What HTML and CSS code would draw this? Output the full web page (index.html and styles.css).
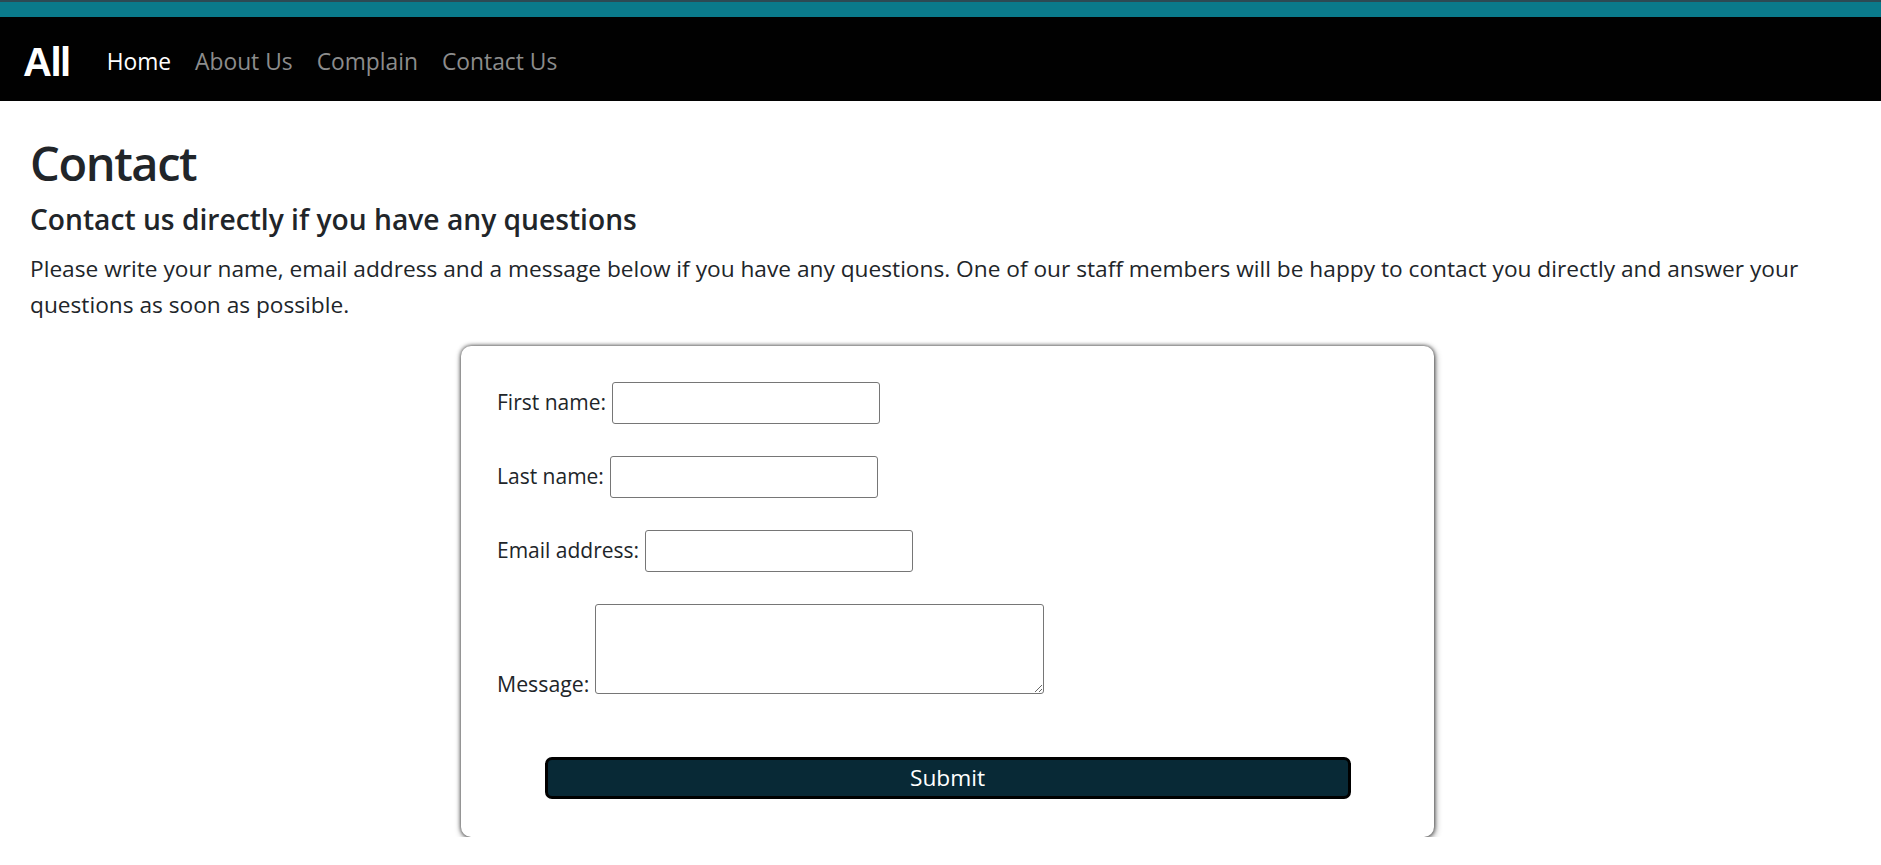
FILE: index.html
```html
<!DOCTYPE html>
<html lang="en">
<head>
<meta charset="utf-8">
<title>Contact</title>
<link rel="stylesheet" href="styles.css">
</head>
<body>
<div class="topbar"></div>
<nav class="navbar">
  <a class="brand" href="#">All</a>
  <ul class="nav-links">
    <li><a class="nav-link active" href="#">Home</a></li>
    <li><a class="nav-link" href="#">About Us</a></li>
    <li><a class="nav-link" href="#">Complain</a></li>
    <li><a class="nav-link" href="#">Contact Us</a></li>
  </ul>
</nav>
<main class="main">
  <h1 class="title">Contact</h1>
  <h5 class="subtitle">Contact us directly if you have any questions</h5>
  <p class="intro">Please write your name, email address and a message below if you have any questions. One of our staff members will be happy to contact you directly and answer your questions as soon as possible.</p>
  <form class="card">
    <div class="row">
      <label class="label" for="fname">First name:</label>
      <input class="field" type="text" id="fname">
    </div>
    <div class="row">
      <label class="label" for="lname">Last name:</label>
      <input class="field" type="text" id="lname">
    </div>
    <div class="row">
      <label class="label" for="email">Email address:</label>
      <input class="field" type="email" id="email">
    </div>
    <div class="row row-message">
      <label class="label label-message" for="msg">Message:</label>
      <textarea class="message" id="msg"></textarea>
    </div>
    <button class="submit" type="button">Submit</button>
  </form>
</main>
</body>
</html>
```
FILE: styles.css
```css
* { box-sizing: border-box; }

body {
  margin: 0;
  font-family: "Open Sans", "Noto Sans", sans-serif;
  font-size: 22.7px;
  line-height: 36px;
  color: #212529;
  background: #fff;
}

.topbar {
  height: 17px;
  background: #0a7a8b;
  border-top: 2px solid #2c4a54;
}

.navbar {
  height: 84px;
  background: #010101;
  display: flex;
  align-items: center;
  padding-left: 23px;
  padding-top: 5px;
}

.brand {
  font-family: "Liberation Sans", Arial, sans-serif;
  font-weight: 700;
  font-size: 40px;
  letter-spacing: -1.5px;
  color: #fff;
  text-decoration: none;
  margin-right: 25px;
  line-height: 1;
}

.nav-links {
  display: flex;
  list-style: none;
  margin: 0;
  padding: 0;
}

.nav-link {
  display: block;
  padding: 0 12px;
  font-size: 22.8px;
  color: #8c8c8c;
  text-decoration: none;
}

.nav-link.active { color: #fff; }

.main {
  padding: 32px 30px 0;
}

.title {
  margin: 0 0 10px;
  font-size: 47px;
  font-weight: 600;
  letter-spacing: -1.4px;
  line-height: 60px;
}

.subtitle {
  margin: 0 0 14px;
  font-size: 28.2px;
  font-weight: 600;
  line-height: 1.2;
}

.intro {
  margin: 0 0 23px;
}

.card {
  width: 973px;
  margin-left: 431px;
  padding: 36px 36px 38px;
  border-radius: 10px;
  background: #fff;
  box-shadow: 0 0 4px rgba(0, 0, 0, 0.75), 1px 2px 7px rgba(0, 0, 0, 0.45);
}

.row {
  display: flex;
  align-items: center;
  gap: 6px;
  margin-bottom: 32px;
}

.row-message {
  align-items: flex-end;
  margin-bottom: 63px;
}

.label {
  font-size: 21px;
  line-height: 1.2;
}

.label-message {
  font-size: 21.3px;
  line-height: 1;
}

.field {
  width: 268px;
  height: 42px;
  border: 1px solid #767676;
  border-radius: 3px;
  font: inherit;
}

.message {
  width: 449px;
  height: 90px;
  border: 1px solid #767676;
  border-radius: 3px;
  font: inherit;
}

.submit {
  display: block;
  width: 806px;
  height: 42px;
  margin: 0 auto;
  background: #082936;
  border: 3px solid #000;
  border-radius: 7px;
  color: #fff;
  font-family: inherit;
  font-size: 22.7px;
}
```
